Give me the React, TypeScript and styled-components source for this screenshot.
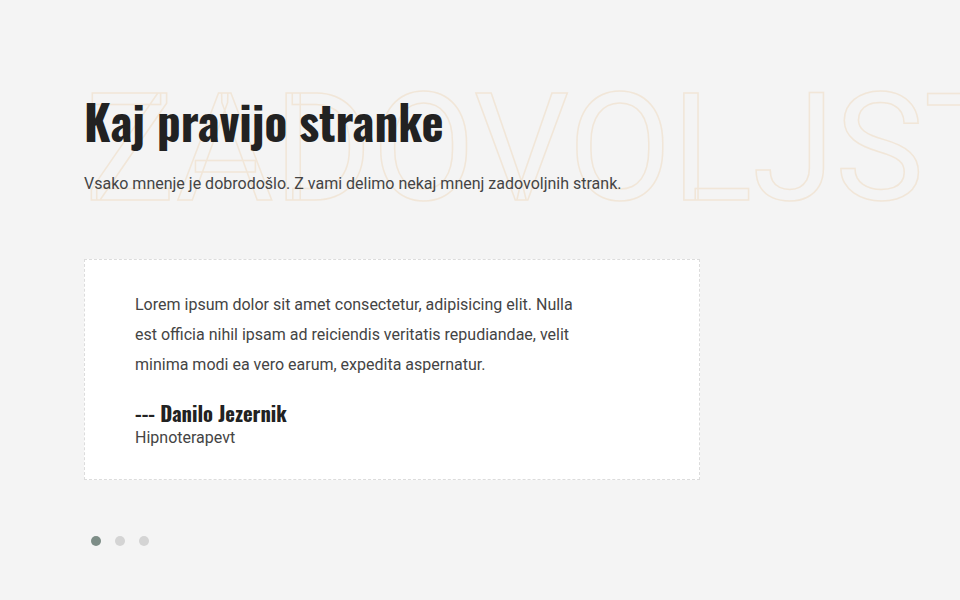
import React from "react";
import styled, { createGlobalStyle } from "styled-components";

const Global = createGlobalStyle`
  html, body { margin: 0; padding: 0; background: #f4f4f4; }
  body { font-family: Roboto, "Liberation Sans", sans-serif; overflow: hidden; }
`;

const Section = styled.section`
  position: relative;
  width: 960px;
  height: 600px;
  overflow: hidden;
  background: #f4f4f4;
  padding: 88px 0 0 84px;
  box-sizing: border-box;
`;

const BackWord = styled.div`
  position: absolute;
  left: 85px;
  top: 74px;
  font-family: Roboto, "Liberation Sans", sans-serif;
  font-size: 150px;
  font-weight: 400;
  line-height: 1;
  color: transparent;
  -webkit-text-stroke: 1.5px #f1e6d8;
  white-space: nowrap;
  pointer-events: none;
`;

const Header = styled.header`
  position: relative;
  display: flex;
  flex-direction: column;
  align-items: flex-start;
`;

const Title = styled.h2`
  margin: 0;
  font-family: "Oswald", "DejaVu Sans Condensed", sans-serif;
  font-weight: 700;
  font-size: 47px;
  line-height: 66px;
  color: #222;
  white-space: nowrap;
`;

const Lead = styled.p`
  margin: 18px 0 0;
  font-size: 16px;
  line-height: 24px;
  color: #444;
`;

const Card = styled.div`
  position: relative;
  margin-top: 63px;
  width: 616px;
  height: 221px;
  box-sizing: border-box;
  background: #fff;
  border: 1px dashed #dcdcdc;
  padding: 30px 50px 0 50px;
  display: flex;
  flex-direction: column;
  align-items: flex-start;
`;

const Quote = styled.p`
  margin: 0;
  width: 450px;
  font-size: 16px;
  line-height: 30px;
  color: #444;
`;

const Author = styled.h4`
  margin: 20px 0 0;
  font-family: "Oswald", "DejaVu Sans Condensed", sans-serif;
  font-weight: 700;
  font-size: 20.5px;
  line-height: 26px;
  color: #222;
  white-space: nowrap;
`;

const Role = styled.div`
  margin-top: 1px;
  font-size: 16px;
  line-height: 22px;
  color: #444;
`;

const Dots = styled.div`
  display: flex;
  gap: 14px;
  margin: 56px 0 0 7px;
`;

const Dot = styled.span<{ $active?: boolean }>`
  width: 10px;
  height: 10px;
  border-radius: 50%;
  background: ${(p) => (p.$active ? "#7d8d87" : "#d4d4d4")};
`;

export default function App() {
  return (
    <>
      <Global />
      <Section>
        <BackWord>ZADOVOLJSTVO</BackWord>
        <Header>
          <Title>Kaj pravijo stranke</Title>
          <Lead>Vsako mnenje je dobrodošlo. Z vami delimo nekaj mnenj zadovoljnih strank.</Lead>
        </Header>
        <Card>
          <Quote>
            Lorem ipsum dolor sit amet consectetur, adipisicing elit. Nulla est officia nihil ipsam ad
            reiciendis veritatis repudiandae, velit minima modi ea vero earum, expedita aspernatur.
          </Quote>
          <Author>--- Danilo Jezernik</Author>
          <Role>Hipnoterapevt</Role>
        </Card>
        <Dots>
          <Dot $active />
          <Dot />
          <Dot />
        </Dots>
      </Section>
    </>
  );
}
